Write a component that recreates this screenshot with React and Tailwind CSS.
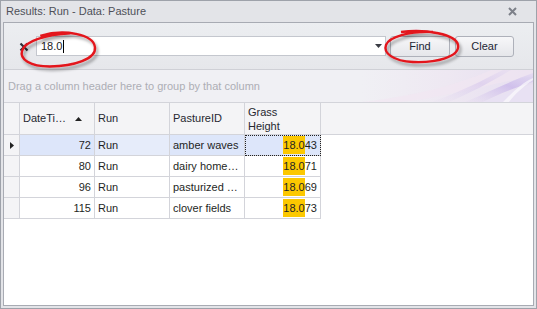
import React from "react";

const font = { fontFamily: '"Liberation Sans", Arial, sans-serif' };

const rows = [
  { id: 72, run: "Run", pasture: "amber waves", rest: "43", selected: true },
  { id: 80, run: "Run", pasture: "dairy home…", rest: "71" },
  { id: 96, run: "Run", pasture: "pasturized …", rest: "69" },
  { id: 115, run: "Run", pasture: "clover fields", rest: "73" },
];

function Swirl() {
  return (
    <svg width="172" height="32" viewBox="0 0 172 32" className="shrink-0">
      <defs>
        <linearGradient id="wash" x1="0" y1="0" x2="1" y2="0">
          <stop offset="0" stopColor="#f0f0f4" />
          <stop offset="0.5" stopColor="#eee8f2" />
          <stop offset="1" stopColor="#e6def0" />
        </linearGradient>
        <linearGradient id="band" x1="0" y1="1" x2="1" y2="0">
          <stop offset="0" stopColor="#dcd0ee" stopOpacity="0.1" />
          <stop offset="0.6" stopColor="#cab8ea" stopOpacity="0.8" />
          <stop offset="1" stopColor="#dad0f0" stopOpacity="0.5" />
        </linearGradient>
      </defs>
      <rect width="172" height="32" fill="url(#wash)" />
      <path d="M0 32 C40 28 90 18 130 0 L172 0 L172 6 C130 14 80 28 40 32 Z" fill="#f1e6f1" opacity="0.6" />
      <path d="M70 32 C100 22 122 10 142 0 L150 0 C130 12 108 24 88 32 Z" fill="url(#band)" opacity="0.5" />
      <path d="M104 32 C128 22 152 10 172 3 L172 12 C152 18 134 26 122 32 Z" fill="url(#band)" />
      <path d="M122 32 C142 24 158 18 172 14 L172 32 Z" fill="#e8e1f3" />
      <path d="M142 32 C152 22 162 12 172 8 L172 10 C163 16 154 24 148 32 Z" fill="#ffffff" opacity="0.6" />
    </svg>
  );
}

function Marks() {
  return (
    <svg width="537" height="309" className="absolute inset-0 pointer-events-none">
      <defs>
        <filter id="sh" x="-20%" y="-40%" width="140%" height="180%">
          <feDropShadow dx="2" dy="3" stdDeviation="1.6" floodColor="#000" floodOpacity="0.35" />
        </filter>
      </defs>
      <g filter="url(#sh)" fill="none" stroke="#e3141b" strokeWidth="2.4">
        <path d="M40 34 C64 28 93 35 94 48 C95 60 72 66 48 65 C28 64 18 56 21 48 C24 38 46 33 70 33" transform="rotate(-3 57 48)" />
        <path d="M400 31 C425 28 455 33 457 44 C459 56 435 62 412 61 C392 60 382 52 385 44 C388 36 408 30 432 31" />
      </g>
    </svg>
  );
}

export default function App() {
  return (
    <div style={font} className="relative w-[537px] h-[309px] bg-[#e3e4e8] border border-[#9ea2aa] flex flex-col overflow-hidden">
      <div className="h-[21px] flex items-center justify-between pl-[5px] pr-[19px] text-[11px] text-[#4e5058]">
        <span>Results: Run - Data: Pasture</span>
        <svg width="9" height="9" viewBox="0 0 9 9">
          <path d="M1 1 L8 8 M8 1 L1 8" stroke="#7d8089" strokeWidth="2" />
        </svg>
      </div>

      <div className="flex-1 mx-[2px] mb-[2px] border border-[#a8abb3] bg-white flex flex-col">
        {/* find panel */}
        <div className="h-[46px] bg-gradient-to-b from-[#eceef1] to-[#e6e7eb] flex items-start pt-[13px] pl-[15px]">
          <svg width="10" height="10" viewBox="0 0 10 10" className="mt-[6px]">
            <path d="M1.5 1.5 L8.5 8.5 M8.5 1.5 L1.5 8.5" stroke="#2e3038" strokeWidth="2.2" />
          </svg>
          <div className="ml-[7px] w-[350px] h-[20px] bg-white border border-[#c4c7ce] flex items-center justify-between pl-[4px] pr-[3px]">
            <span className="text-[11px] text-[#1a1a1a] flex items-center">
              18.0<span className="inline-block w-px h-[13px] bg-black ml-px" />
            </span>
            <svg width="7" height="4" viewBox="0 0 7 4">
              <path d="M0 0 L7 0 L3.5 4 Z" fill="#3a3c44" />
            </svg>
          </div>
          <button className="ml-[4px] w-[60px] h-[21px] rounded-[3px] border border-[#aeb1ba] bg-gradient-to-b from-[#f7f7f9] to-[#e5e6ea] text-[11px] text-[#1d2534]">
            Find
          </button>
          <button className="ml-[5px] w-[59px] h-[21px] rounded-[3px] border border-[#aeb1ba] bg-gradient-to-b from-[#f7f7f9] to-[#e5e6ea] text-[11px] text-[#1d2534]">
            Clear
          </button>
        </div>

        {/* group panel */}
        <div className="h-[33px] border-t border-[#cfd0d6] bg-[#f0f0f4] flex items-center justify-between">
          <span className="pl-[4px] text-[11px] text-[#adaeb4]">Drag a column header here to group by that column</span>
          <Swirl />
        </div>

        {/* grid header */}
        <div className="h-[33px] border-t border-b border-[#d3d4da] bg-[#f4f4f6] flex text-[11px] text-[#262830]">
          <div className="w-[16px] border-r border-[#d3d4da]" />
          <div className="w-[75px] border-r border-[#d3d4da] flex items-center pl-[3px] gap-[9px]">
            <span>DateTi…</span>
            <svg width="7" height="4" viewBox="0 0 7 4">
              <path d="M3.5 0 L7 4 L0 4 Z" fill="#222" />
            </svg>
          </div>
          <div className="w-[75px] border-r border-[#d3d4da] flex items-center pl-[3px]">Run</div>
          <div className="w-[75px] border-r border-[#d3d4da] flex items-center pl-[3px]">PastureID</div>
          <div className="w-[76px] border-r border-[#d3d4da] flex flex-col justify-center pl-[3px] leading-[14px]">
            <span>Grass</span>
            <span>Height</span>
          </div>
        </div>

        {/* grid rows */}
        {rows.map((r) => (
          <div key={r.id} className="h-[21px] flex text-[11px] text-[#1e1f24]">
            <div className="w-[16px] border-r border-b border-[#d3d4da] bg-[#f4f4f6] flex items-center justify-center">
              {r.selected && (
                <svg width="4" height="7" viewBox="0 0 4 7">
                  <path d="M0 0 L4 3.5 L0 7 Z" fill="#222" />
                </svg>
              )}
            </div>
            <div className={`w-[75px] border-r border-b border-[#d3d4da] flex items-center justify-end pr-[3px] ${r.selected ? "bg-[#dde6fa]" : ""}`}>
              {r.id}
            </div>
            <div className={`w-[75px] border-r border-b border-[#d3d4da] flex items-center pl-[3px] ${r.selected ? "bg-[#e6ecfa]" : ""}`}>
              {r.run}
            </div>
            <div className={`w-[75px] border-r border-b border-[#d3d4da] flex items-center pl-[3px] ${r.selected ? "bg-[#dde6fa]" : ""}`}>
              {r.pasture}
            </div>
            <div className={`w-[76px] border-r border-b border-[#d3d4da] flex items-center justify-end pr-[3px] ${r.selected ? "bg-[#dde6fa] outline outline-1 outline-dotted outline-[#222] -outline-offset-1" : ""}`}>
              <span className="bg-[#fcc800] h-[18px] flex items-center">18.0</span>
              <span>{r.rest}</span>
            </div>
          </div>
        ))}
      </div>

      <Marks />
    </div>
  );
}
